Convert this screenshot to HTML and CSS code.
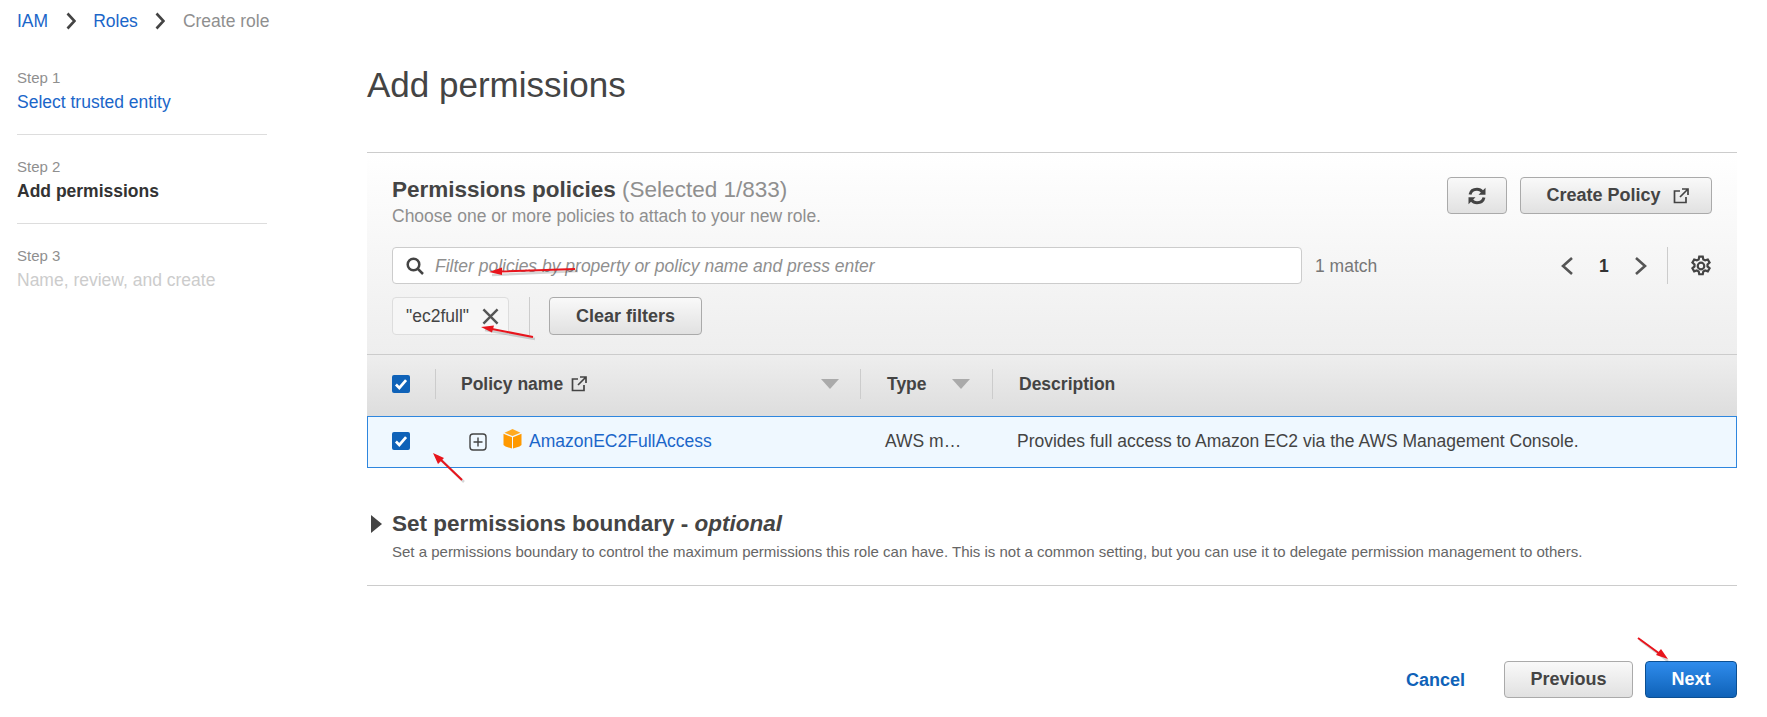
FILE: index.html
```html
<!DOCTYPE html>
<html lang="en">
<head>
	<meta charset="UTF-8">
	<title>Create role</title>
	<link rel="stylesheet" href="styles.css">
</head>
<body>
	<div class="crumbs">
		<a class="link">IAM</a>
		<svg class="crumb-sep" viewBox="0 0 10 18"><path d="M1.500 1.500l7 7.500-7 7.500" /></svg>
		<a class="link">Roles</a>
		<svg class="crumb-sep" viewBox="0 0 10 18"><path d="M1.500 1.500l7 7.500-7 7.500" /></svg>
		<span class="crumb-now">Create role</span>
	</div>

	<div class="layout">
		<div class="steps">
			<div class="step">
				<div class="step-num">Step 1</div>
				<a class="link">Select trusted entity</a>
			</div>
			<div class="step">
				<div class="step-num">Step 2</div>
				<b class="step-now">Add permissions</b>
			</div>
			<div class="step step-last">
				<div class="step-num">Step 3</div>
				<span class="step-off">Name, review, and create</span>
			</div>
		</div>

		<div class="main">
			<h1>Add permissions</h1>

			<div class="panel">
				<div class="panel-top">
					<div class="panel-head">
						<div>
							<h2>Permissions policies <span class="count">(Selected 1/833)</span></h2>
							<p class="sub">Choose one or more policies to attach to your new role.</p>
						</div>
						<div class="actions">
							<button class="btn btn-icon">
								<svg width="20" height="20" viewBox="0 0 20 20"><path class="refresh" d="M3 8.500C3.800 5 6.600 3.200 10 3.200c2.400 0 4.200 1.100 5.300 2.600M17 11.500C16.200 15 13.400 16.800 10 16.800c-2.400 0-4.200-1.100-5.300-2.600" /><path class="fill" d="M18.500 1.800v7h-7zM1.500 18.200v-7h7z" /></svg>
							</button>
							<button class="btn btn-policy">Create Policy
								<svg class="ext" viewBox="0 0 18 18"><path d="M8 4H2.500v11.500H14V10M10 2h6v6M16 2L8 10" /></svg>
							</button>
						</div>
					</div>

					<div class="filter-row">
						<div class="search">
							<svg width="18" height="18" viewBox="0 0 18 18"><circle cx="7.500" cy="7.500" r="5.800" /><path d="M11.500 11.500L17 17" /></svg>
							<span>Filter policies by property or policy name and press enter</span>
						</div>
						<span class="matches">1 match</span>
						<div class="pager">
							<svg class="pg" viewBox="0 0 14 20"><path d="M12 2L3 10l9 8" /></svg>
							<b>1</b>
							<svg class="pg" viewBox="0 0 14 20"><path d="M2 2l9 8-9 8" /></svg>
						</div>
						<div class="gear-wrap">
							<svg width="22" height="22" viewBox="0 0 20 20"><circle cx="10" cy="10" r="3" /><path d="M8.400 1.500h3.200l.5 2.500 1.700.9 2.400-.8 1.600 2.800-1.900 1.700v1.800l1.900 1.700-1.600 2.800-2.400-.8-1.700.9-.5 2.500H8.400l-.5-2.500-1.700-.9-2.400.8-1.600-2.800 1.900-1.700V8.600L2.200 6.900l1.600-2.800 2.400.8 1.700-.9z" /></svg>
						</div>
					</div>

					<div class="chip-row">
						<div class="chip">"ec2full"
							<svg width="17" height="17" viewBox="0 0 18 18"><path d="M1.500 1.500l15 15M16.500 1.500l-15 15" /></svg>
						</div>
						<div class="chip-sep"></div>
						<button class="btn btn-clear">Clear filters</button>
					</div>
				</div>

				<div class="thead">
					<div class="c-check"><span class="check"><svg viewBox="0 0 16 16"><path d="M3.500 8.500l3 3 6-7" /></svg></span></div>
					<div class="c-name th">Policy name
						<svg class="ext" viewBox="0 0 18 18"><path d="M8 4H2.500v11.500H14V10M10 2h6v6M16 2L8 10" /></svg>
						<i class="sort"></i>
					</div>
					<div class="c-type th">Type <i class="sort"></i></div>
					<div class="c-desc th">Description</div>
				</div>

				<div class="trow">
					<div class="c-check"><span class="check"><svg viewBox="0 0 16 16"><path d="M3.500 8.500l3 3 6-7" /></svg></span></div>
					<div class="c-name-row">
						<svg class="plus" viewBox="0 0 18 18"><rect x="1" y="1" width="16" height="16" rx="3" /><path d="M9 4.500v9M4.500 9h9" /></svg>
						<svg class="cube" viewBox="0 0 18 20"><path class="cube-a" d="M0 4.800L8.500 8.200v11.300L2 17.600 0 16z" /><path class="cube-b" d="M18 4.800L9.500 8.200v11.300l6.500-1.900 2-1.600z" /><path class="cube-c" d="M9 0l8 3.800-8 3.300-8-3.300z" /></svg>
						<a class="link">AmazonEC2FullAccess</a>
					</div>
					<div class="c-type-row">AWS m…</div>
					<div class="c-desc-row">Provides full access to Amazon EC2 via the AWS Management Console.</div>
				</div>
			</div>

			<div class="boundary">
				<h3><i class="caret"></i>Set permissions boundary - <em>optional</em></h3>
				<p>Set a permissions boundary to control the maximum permissions this role can have. This is not a common setting, but you can use it to delegate permission management to others.</p>
			</div>

			<div class="footer">
				<a class="cancel">Cancel</a>
				<button class="btn btn-prev">Previous</button>
				<button class="btn btn-next">Next</button>
			</div>
		</div>
	</div>

	<!-- red annotation arrows drawn on top of the screenshot -->
	<svg class="marks" width="1767" height="717" viewBox="0 0 1767 717">
		<path class="mark-shadow" d="M578 271L492 275M535 339L485 330M464 482L437 456M1640 640L1668 661" />
		<path class="mark" d="M575 269L500 271.500M533 337L492 329M462 480L440 459M1638 638L1660 654" />
		<path class="mark-head" d="M489 272L502 267.500V275zM481 327L494 325.500L492 332.500zM433 453L444 458L438 464zM1668 659L1656 655L1661 649z" />
	</svg>
</body>
</html>
```

FILE: styles.css
```css
* {
	box-sizing: border-box;
}

html, body {
	margin: 0;
	height: 717px;
	overflow: hidden;
}

body {
	position: relative;
	background: #fff;
	font-family: "Liberation Sans", Arial, sans-serif;
	font-size: 17.500px;
	line-height: 20px;
	color: #444;
}

svg {
	flex: none;
	fill: none;
}

.link {
	color: #1b66c9;
}

/* breadcrumb */
.crumbs {
	display: flex;
	align-items: center;
	height: 42px;
	padding-left: 17px;
}
.crumb-sep {
	width: 10px;
	height: 18px;
	margin: 0 17.500px;
}
.crumb-sep path {
	stroke: #444;
	stroke-width: 2.600;
}
.crumb-now {
	color: #8f8f8f;
}

.layout {
	display: flex;
}

/* left steps */
.steps {
	width: 367px;
	padding: 26px 100px 0 17px;
	flex: none;
}
.step {
	height: 67px;
	border-bottom: 1px solid #ddd;
	margin-bottom: 22px;
}
.step:last-child {
	border-bottom: 0;
}
.step-num {
	font-size: 15px;
	color: #8f8f8f;
	height: 24px;
}
.step-now {
	color: #333;
}
.step-off {
	color: #ccc;
}

/* main column */
.main {
	width: 1370px;
	flex: none;
}
h1 {
	margin: 21px 0 0;
	height: 89px;
	font-size: 35px;
	font-weight: 400;
	line-height: 44px;
	color: #444;
}
.panel {
	border-top: 1px solid #ccc;
}
.panel-top {
	height: 201px;
	padding: 24px 25px 0 25px;
	background: linear-gradient(#fff, #eee);
}
.panel-head {
	display: flex;
	justify-content: space-between;
	height: 70px;
}
h2 {
	margin: 1px 0 0;
	font-size: 22.500px;
	line-height: 24px;
	color: #444;
}
.count {
	font-weight: 400;
	color: #8f8f8f;
}
.sub {
	margin: 4px 0 0;
	color: #8f8f8f;
}
.actions {
	display: flex;
	gap: 13px;
}

.btn {
	height: 37px;
	border: 1px solid #aaa;
	border-radius: 4px;
	background: linear-gradient(#f9f9f9, #e1e1e1);
	font: bold 18px "Liberation Sans", Arial, sans-serif;
	color: #444;
	padding: 0;
}
.btn-icon {
	width: 60px;
	display: flex;
	align-items: center;
	justify-content: center;
}
.refresh {
	stroke: #444;
	stroke-width: 3;
}
.fill {
	fill: #444;
}
.btn-policy {
	width: 192px;
	display: flex;
	align-items: center;
	justify-content: center;
	gap: 11px;
	padding-left: 4px;
}
.ext {
	width: 18px;
	height: 18px;
}
.ext path {
	stroke: #444;
	stroke-width: 1.700;
}

.filter-row {
	display: flex;
	align-items: center;
	height: 37px;
}
.search {
	width: 910px;
	height: 37px;
	display: flex;
	align-items: center;
	gap: 11px;
	padding-left: 13px;
	background: #fff;
	border: 1px solid #ccc;
	border-radius: 4px;
	font-style: italic;
	color: #8f8f8f;
}
.search circle, .search path {
	stroke: #444;
	stroke-width: 2.500;
}
.matches {
	margin-left: 13px;
	color: #777;
	width: 245px;
}
.pager {
	display: flex;
	align-items: center;
	gap: 25px;
	width: 107px;
	color: #333;
}
.pg {
	width: 14px;
	height: 20px;
}
.pg path {
	stroke: #555;
	stroke-width: 2.600;
}
.gear-wrap {
	height: 37px;
	border-left: 1px solid #ccc;
	padding-left: 22px;
	display: flex;
	align-items: center;
}
.gear-wrap circle, .gear-wrap path {
	stroke: #444;
	stroke-width: 2;
}

.chip-row {
	display: flex;
	align-items: center;
	margin-top: 13px;
	height: 38px;
}
.chip {
	width: 117px;
	height: 38px;
	display: flex;
	align-items: center;
	gap: 13px;
	padding-left: 13px;
	background: #f6f6f6;
	border: 1px solid #ddd;
	border-radius: 4px;
	white-space: nowrap;
}
.chip path {
	stroke: #555;
	stroke-width: 2.600;
}
.chip-sep {
	width: 1px;
	height: 38px;
	background: #ccc;
	margin: 0 19px 0 20px;
}
.btn-clear {
	width: 153px;
	height: 38px;
}

/* table */
.thead {
	display: flex;
	align-items: center;
	height: 62px;
	padding-bottom: 4px;
	border-top: 1px solid #ccc;
	background: linear-gradient(#eee, #ddd);
	font-weight: 700;
}
.c-check {
	width: 69px;
	flex: none;
	padding-left: 25px;
	display: flex;
}
.thead .c-check {
	height: 30px;
	align-items: center;
	border-right: 1px solid #ccc;
}
.check {
	width: 18px;
	height: 18px;
	border-radius: 2px;
	background: #0f62b8;
	display: block;
}
.check svg {
	display: block;
}
.check path {
	stroke: #fff;
	stroke-width: 2.400;
}
.th {
	height: 30px;
	display: flex;
	align-items: center;
}
.c-name {
	width: 425px;
	flex: none;
	padding-left: 25px;
	gap: 7px;
	border-right: 1px solid #ccc;
}
.c-type {
	width: 132px;
	flex: none;
	padding-left: 26px;
	border-right: 1px solid #ccc;
}
.c-type .sort {
	margin-right: 22px;
}
.c-desc {
	padding-left: 26px;
}
.sort {
	width: 0;
	height: 0;
	margin-left: auto;
	margin-right: 21px;
	border-left: 9px solid transparent;
	border-right: 9px solid transparent;
	border-top: 10px solid #aaa;
}

.trow {
	display: flex;
	align-items: center;
	height: 52px;
	padding-bottom: 3px;
	background: #eff8ff;
	border: 1px solid #2e86de;
}
.trow .c-check {
	width: 67px;
	padding-left: 24px;
}
.c-name-row {
	width: 425px;
	flex: none;
	display: flex;
	align-items: center;
	padding-left: 34px;
}
.plus {
	width: 18px;
	height: 18px;
	margin: 3px 16px 0 0;
}
.plus rect, .plus path {
	stroke: #444;
	stroke-width: 1.400;
}
.cube {
	width: 19px;
	height: 20px;
	margin: -4px 7px 0 0;
}
.cube-a, .cube-b {
	fill: #f90;
}
.cube-c {
	fill: #fa2;
}
.c-type-row {
	width: 132px;
	flex: none;
	padding-left: 25px;
}
.c-desc-row {
	padding-left: 25px;
	white-space: nowrap;
}

/* boundary */
.boundary {
	margin-top: 41px;
	height: 77px;
	border-bottom: 1px solid #ccc;
}
h3 {
	margin: 0;
	position: relative;
	padding-left: 25px;
	font-size: 22.500px;
	line-height: 30px;
	color: #444;
}
.caret {
	position: absolute;
	left: 4px;
	top: 6px;
	border-left: 11px solid #444;
	border-top: 9px solid transparent;
	border-bottom: 9px solid transparent;
}
.boundary p {
	margin: 3px 0 0 25px;
	font-size: 15px;
	color: #666;
}

/* footer */
.footer {
	display: flex;
	justify-content: flex-end;
	align-items: center;
	gap: 12px;
	margin-top: 75px;
}
.cancel {
	color: #0f62b8;
	font-weight: 700;
	font-size: 18px;
	margin-right: 27px;
}
.btn-prev {
	width: 129px;
}
.btn-next {
	width: 92px;
	background: linear-gradient(#2f8cec, #0f62b8);
	border-color: #0b4f92;
	color: #fff;
}

/* annotations */
.marks {
	position: absolute;
	left: 0;
	top: 0;
}
.mark {
	stroke: #e8141c;
	stroke-width: 2;
}
.mark-shadow {
	stroke: rgba(0, 0, 0, 0.16);
	stroke-width: 2.500;
}
.mark-head {
	fill: #e8141c;
}
```
